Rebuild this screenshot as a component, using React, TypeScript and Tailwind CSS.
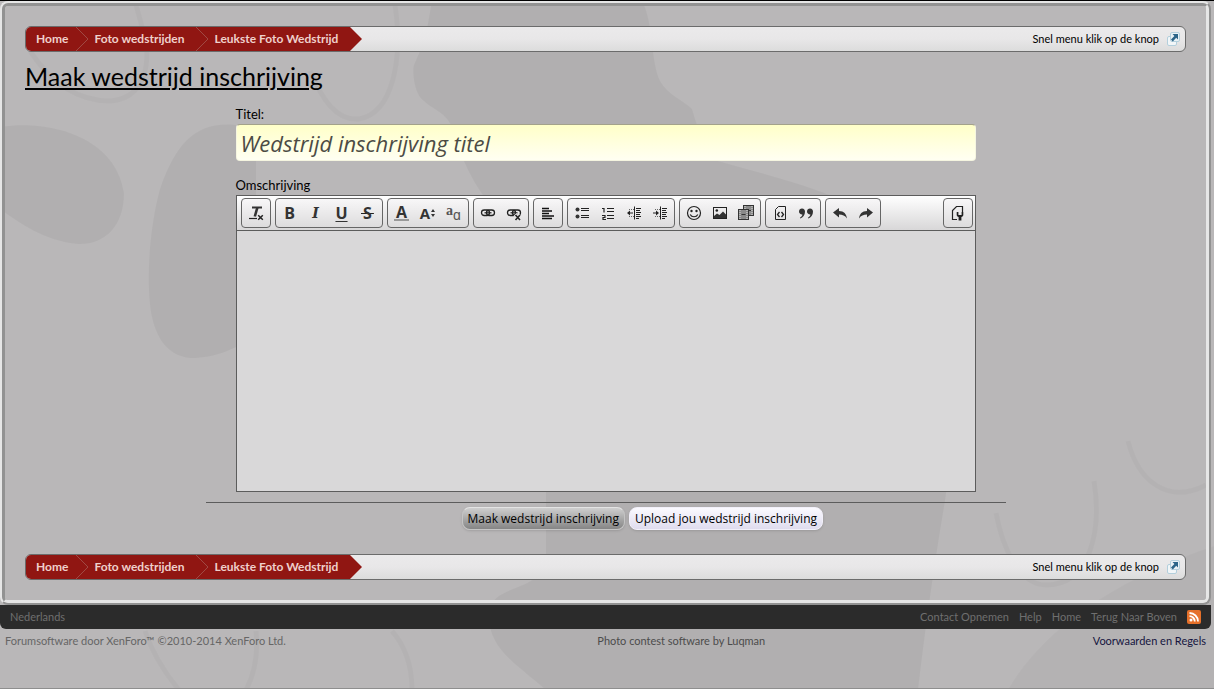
import type { ReactNode } from "react";

const crumbs = ["Home", "Foto wedstrijden", "Leukste Foto Wedstrijd"];

const footerLinks = ["Contact Opnemen", "Help", "Home", "Terug Naar Boven"];

type Tool = { label: string; icon: ReactNode };

function Icon({ children }: { children: ReactNode }) {
  return (
    <svg viewBox="0 0 16 16" className="w-4 h-4" fill="none" stroke="#222" aria-hidden="true">
      {children}
    </svg>
  );
}

const linkShape = (
  <>
    <rect x="1.5" y="5" width="8" height="5.5" rx="2.7" strokeWidth="1.3" />
    <rect x="6.5" y="5" width="8" height="5.5" rx="2.7" strokeWidth="1.3" />
    <path d="M4.5 7.8h7" strokeWidth="1.2" />
  </>
);

const indentLines = (
  <>
    <path d="M8.5 1.5v13" />
    <path d="M10 3.5h5M10 5.5h4M10 7.5h5M10 9.5h4M10 11.5h5M10 13.5h3" />
    <path d="M3 4.5h5M3 11.5h5" strokeDasharray="1 1" stroke="#666" />
  </>
);

const toolGroups: Tool[][] = [
  [
    {
      label: "Opmaak verwijderen",
      icon: (
        <Icon>
          <path d="M4 2.5h10" strokeWidth="2" stroke="#333" />
          <path d="M9.4 2.5 6.8 11.5" strokeWidth="2.6" stroke="#333" />
          <path d="M1 13.5h8" strokeWidth="1.2" />
          <path d="m10.2 10.2 4.6 4.6m0-4.6-4.6 4.6" strokeWidth="1.5" />
        </Icon>
      ),
    },
  ],
  [
    { label: "Vet", icon: <span className="font-bold">B</span> },
    { label: "Cursief", icon: <span className="font-bold italic font-['DejaVu_Serif',serif] text-sm">I</span> },
    { label: "Onderstrepen", icon: <span className="font-bold underline underline-offset-2">U</span> },
    {
      label: "Doorhalen",
      icon: <span className="font-bold px-[2px] bg-[linear-gradient(#222,#222)] bg-[length:100%_1px] bg-center bg-no-repeat">S</span>,
    },
  ],
  [
    { label: "Tekstkleur", icon: <span className="font-bold leading-[14px] border-b-2 border-[#999] px-[2px]">A</span> },
    {
      label: "Lettergrootte",
      icon: (
        <span className="flex items-center gap-px font-bold text-[15px]">
          A
          <svg viewBox="0 0 4 8" className="w-1 h-2" fill="#333" aria-hidden="true">
            <path d="M2 0l2 3H0zM2 8l2-3H0z" />
          </svg>
        </span>
      ),
    },
    {
      label: "Lettertype",
      icon: (
        <span className="flex text-[#555] text-sm leading-none">
          <span className="font-bold font-['Liberation_Serif',serif] pb-1">a</span>
          <span className="pt-1">ɑ</span>
        </span>
      ),
    },
  ],
  [
    { label: "Link invoegen", icon: <Icon>{linkShape}</Icon> },
    {
      label: "Link verwijderen",
      icon: (
        <Icon>
          {linkShape}
          <path d="m9 9.5 5 5.5m0-5.500-5 5.5" strokeWidth="3.5" stroke="#e6e5e6" />
          <path d="m9.5 10 4.500 5m0-5-4.500 5" strokeWidth="1.6" />
        </Icon>
      ),
    },
  ],
  [
    {
      label: "Uitlijnen",
      icon: (
        <Icon>
          <path d="M2 3.5h7M2 6h10M2 8.5h7M2 11h12M2 13.5h10" strokeWidth="1.6" stroke="#111" />
        </Icon>
      ),
    },
  ],
  [
    {
      label: "Opsomming",
      icon: (
        <Icon>
          <circle cx="3.5" cy="4.5" r="2" fill="#333" stroke="none" />
          <circle cx="3.5" cy="11.5" r="2" fill="#333" stroke="none" />
          <path d="M7 3.5h8M7 5.5h8M7 10.5h8M7 12.5h8" />
        </Icon>
      ),
    },
    {
      label: "Genummerde lijst",
      icon: (
        <Icon>
          <path d="M2 3.5h2v4M2 10.5h3v2H3v2h3" strokeWidth="1.2" />
          <path d="M7 3.5h7M7 6.5h7M7 10.5h7M7 13.5h7" />
        </Icon>
      ),
    },
    {
      label: "Inspringing verkleinen",
      icon: (
        <Icon>
          {indentLines}
          <path d="M2 8h5" />
          <path d="M1 8l3-2.5v5z" fill="#222" stroke="none" />
        </Icon>
      ),
    },
    {
      label: "Inspringing vergroten",
      icon: (
        <Icon>
          {indentLines}
          <path d="M1 8h5" />
          <path d="M7 8 4 5.5v5z" fill="#222" stroke="none" />
        </Icon>
      ),
    },
  ],
  [
    {
      label: "Smileys",
      icon: (
        <Icon>
          <circle cx="8" cy="8" r="6.5" strokeWidth="1.2" />
          <circle cx="5.5" cy="6" r="1.2" fill="#222" stroke="none" />
          <circle cx="10.5" cy="6" r="1.2" fill="#222" stroke="none" />
          <path d="M4.2 9.5c1.5 3 6.1 3 7.6 0" strokeWidth="1.2" />
        </Icon>
      ),
    },
    {
      label: "Afbeelding",
      icon: (
        <Icon>
          <rect x="1.5" y="2.5" width="13" height="11" />
          <circle cx="4.8" cy="5.5" r="1.3" fill="#222" stroke="none" />
          <path d="M2 13v-2l3-2.5L7.5 10 11 6.5l3 3V13z" fill="#333" stroke="none" />
        </Icon>
      ),
    },
    {
      label: "Media",
      icon: (
        <Icon>
          <rect x="5.5" y=".5" width="10" height="10" fill="#8a8a8a" stroke="#333" />
          <path d="M7 1v9M14 1v9" stroke="#ddd" strokeDasharray="1 1" />
          <path d="M8 5.5h5" stroke="#333" />
          <rect x=".5" y="4.5" width="10" height="10" fill="#8a8a8a" stroke="#333" />
          <path d="M2 5v9M9 5v9" stroke="#ddd" strokeDasharray="1 1" />
          <path d="M3.500 9.500h4" stroke="#333" />
        </Icon>
      ),
    },
  ],
  [
    {
      label: "Code",
      icon: (
        <Icon>
          <path d="M6.5 1.5h7v13h-10v-10z" />
          <path d="M7.5 7l-2 2.5 2 2.5M9.5 7l2 2.5-2 2.5" strokeWidth="1.3" />
        </Icon>
      ),
    },
    {
      label: "Citaat",
      icon: (
        <Icon>
          <g fill="#333" stroke="none">
            <path d="M4 3.5c2 0 3 1.3 3 3.2 0 3.3-2 6-4.700 6.800l-.4-.8c1.5-.9 2.400-2 2.500-3.300C2.400 9.500 1 8.300 1 6.500c0-1.700 1.300-3 3-3z" />
            <path d="M12 3.5c2 0 3 1.3 3 3.2 0 3.300-2 6-4.700 6.800l-.4-.8c1.500-.9 2.400-2 2.500-3.300-2 .1-3.400-1.100-3.400-2.900 0-1.700 1.300-3 3-3z" />
          </g>
        </Icon>
      ),
    },
  ],
  [
    {
      label: "Ongedaan maken",
      icon: (
        <Icon>
          <path d="M1 7.5 7 3v3c5 0 7.500 3 8 7.500-2-3-4.500-4-8-4v3z" fill="#333" stroke="none" />
        </Icon>
      ),
    },
    {
      label: "Opnieuw",
      icon: (
        <Icon>
          <path d="M15 7.5 9 3v3c-5 0-7.500 3-8 7.500 2-3 4.500-4 8-4v3z" fill="#333" stroke="none" />
        </Icon>
      ),
    },
  ],
];

const draftTool: Tool = {
  label: "Concept",
  icon: (
    <Icon>
      <path d="M7 14.5H2.5V5.500L6.500 1.500h6V7" strokeWidth="1.200" />
      <path d="M6.700 7v3c0 1 .9 1.700 1.900 2v3.500h2.800V12c1-.3 1.900-1 1.900-2V7h-1.700v3H8.400V7z" fill="#222" stroke="none" />
    </Icon>
  ),
};

function ToolGroup({ tools }: { tools: Tool[] }) {
  return (
    <div className="flex h-[30px] p-px border border-[#666] rounded bg-gradient-to-b from-[#f8f7f8] to-[#dddcdd]">
      {tools.map((tool) => (
        <button
          key={tool.label}
          type="button"
          aria-label={tool.label}
          className="w-[26px] flex items-center justify-center font-['Open_Sans',sans-serif] text-base leading-none text-[#333]"
        >
          {tool.icon}
        </button>
      ))}
    </div>
  );
}

function Breadcrumb() {
  return (
    <nav className="flex items-center justify-between h-[26px] border border-[#6b6b6b] rounded-md overflow-hidden bg-gradient-to-b from-[#ebeaeb] via-[#e8e7e8] to-[#dcdcdc]">
      <ol className="flex h-full">
        {crumbs.map((crumb, i) => {
          const last = i === crumbs.length - 1;
          return (
            <li key={crumb} className="flex">
              <a
                href="#"
                className={`flex items-center bg-[#901612] text-xs font-bold text-[#efd0cb] ${i === 0 ? "px-[10px] pr-2" : "pl-[6px] pr-3"}`}
              >
                {crumb}
              </a>
              <svg viewBox="0 0 12 24" className={`w-3 h-6 ${last ? "" : "bg-[#901612]"}`} aria-hidden="true">
                <path d="M0 0l12 12L0 24z" fill="#901612" />
                {!last && <path d="M0 0l12 12L0 24" fill="none" stroke="#a04a44" />}
              </svg>
            </li>
          );
        })}
      </ol>
      <a href="#" className="flex items-center gap-2 pr-1 text-[11px] text-black">
        Snel menu klik op de knop
        <svg viewBox="0 0 14 14" className="w-[14px] h-[14px]" fill="none" aria-hidden="true">
          <rect x=".5" y="4.5" width="9" height="9" rx="1.5" fill="#f2f6f8" stroke="#b3cfdc" />
          <rect x="3.5" y=".5" width="9" height="9" rx="1.5" fill="#e9f1f5" stroke="#b3cfdc" />
          <path d="M5.500 2H11v5.500L9.200 5.700 5.800 9.400 4 7.600 7.400 3.900z" fill="#2b6488" />
        </svg>
      </a>
    </nav>
  );
}

function PawBackground() {
  return (
    <svg
      viewBox="0 0 1214 689"
      preserveAspectRatio="xMidYMin slice"
      className="absolute inset-0 w-full h-full pointer-events-none"
      fill="none"
      aria-hidden="true"
    >
      <g fill="#000" fillOpacity=".04">
        <path d="M432 0h210c12 22 8 58 18 80 8 14 24 20 32 28 6 22 14 38 26 52 42 12 84 22 126 40 100 80 120 180 101 300-12 70-20 130-27 189H546c-30-26-58-42-57-75 0-34 57-20 57-60V300c0-60-70-80-92-170-8-20-20-20-30-30-10-6-12-30-10-36 14-30 14-44 18-64z" />
        <path d="M0 126c50-8 116 10 124 66 0 34-20 52-46 51C44 240 20 222 0 208z" />
        <path d="M236 124c-40-4-60 18-76 64-12 44-14 100-8 128 6 28 22 42 44 41 24-2 36-8 60-22V124z" />
        <path d="M1214 545c-90 30-170 80-206 144h206z" fillOpacity=".025" />
      </g>
      <g stroke="#000" strokeOpacity=".022" strokeWidth="5">
        <path d="M30 50c20 30 46 50 80 50 30-2 40-28 36-60L136 4" />
        <path d="M310 70c12 28 26 50 49 48 34-6 44-60 36-114" />
        <path d="M1094 480c8 50-4 104-48 104-28 0-44-40-50-72" />
        <path d="M1128 440c10 40 40 64 78 44" />
        <path d="M145 630c8 24 20 42 34 59M256 630c2 20 0 40-10 59" />
        <path d="M392 630c14 16 20 36 20 59" />
      </g>
    </svg>
  );
}

export default function App() {
  return (
    <div className="relative min-h-screen bg-[#b9b7b8] border-t border-t-black border-b border-b-[#8e8e8e] font-[Lato,'Trebuchet_MS',sans-serif] text-black">
      <PawBackground />

      <div className="relative mr-[3px]">
        <main className="border-[5px] border-[#e6e6e6] [border-style:ridge] rounded-lg p-5">
          <Breadcrumb />

          <h1 className="mt-2 text-[25px] leading-8 underline decoration-2 underline-offset-2">
            Maak wedstrijd inschrijving
          </h1>

          <form className="max-w-[800px] mx-auto mt-3" onSubmit={(e) => e.preventDefault()}>
            <div className="px-[30px]">
              <label htmlFor="title" className="block text-[13px] leading-5">
                Titel:
              </label>
              <input
                id="title"
                type="text"
                placeholder="Wedstrijd inschrijving titel"
                className="block w-full h-[37px] px-1 rounded border border-[#f5f5e0] border-t-[#a3a28a] bg-gradient-to-b from-[#ffffc8] to-[#fffff2] font-['Open_Sans',sans-serif] italic text-[22px] placeholder:text-[#4c4b45] outline-none"
              />

              <label htmlFor="description" className="block mt-[14px] text-[13px] leading-5">
                Omschrijving
              </label>
              <div className="border border-[#5c5c5c]">
                <div className="flex justify-between items-center h-[35px] pl-1 pr-[2px] border-b border-[#5c5c5c] bg-gradient-to-b from-white to-[#d8d7d8]">
                  <div className="flex gap-1">
                    {toolGroups.map((tools) => (
                      <ToolGroup key={tools[0].label} tools={tools} />
                    ))}
                  </div>
                  <ToolGroup tools={[draftTool]} />
                </div>
                <textarea id="description" className="block w-full h-[260px] p-2 bg-[#d9d8d9] resize-none outline-none text-[13px]" />
              </div>
            </div>

            <div className="flex gap-1 mt-[10px] pt-1 pl-64 border-t border-[#5c5c5c] font-['Open_Sans',sans-serif] text-xs">
              <button
                type="submit"
                className="h-[23px] px-[5px] rounded-lg border border-[#c4c4c4] border-t-[#e4e4e4] bg-gradient-to-b from-[#cfcfcf] to-[#858585] leading-none shadow-sm"
              >
                Maak wedstrijd inschrijving
              </button>
              <button
                type="button"
                className="h-[23px] px-[5px] rounded-lg border border-[#f2f0fa] bg-gradient-to-b from-[#fbfaff] to-[#dfdcee] leading-none shadow-sm"
              >
                Upload jou wedstrijd inschrijving
              </button>
            </div>
          </form>

          <div className="mt-6">
            <Breadcrumb />
          </div>
        </main>

        <footer className="text-[11px]">
          <div className="flex items-center justify-between h-6 px-[10px] rounded-b-md bg-[#2b2b2b] text-[#6f6f6f]">
            <a href="#">Nederlands</a>
            <div className="flex items-center gap-[10px]">
              {footerLinks.map((link) => (
                <a key={link} href="#">
                  {link}
                </a>
              ))}
              <a href="#" aria-label="RSS">
                <svg viewBox="0 0 14 14" className="w-[14px] h-[14px]" fill="none" aria-hidden="true">
                  <rect width="14" height="14" rx="2" fill="#e5702a" />
                  <circle cx="4" cy="10" r="1.5" fill="#fff" />
                  <path d="M2.5 6.2a5.3 5.3 0 0 1 5.3 5.3M2.5 3a8.500 8.500 0 0 1 8.500 8.500" stroke="#fff" strokeWidth="1.8" />
                </svg>
              </a>
            </div>
          </div>
          <div className="grid grid-cols-3 px-[5px] leading-6 text-[#666]">
            <a href="#">Forumsoftware door XenForo™ ©2010-2014 XenForo Ltd.</a>
            <span className="pl-48 whitespace-nowrap text-[#4c4c4c]">Photo contest software by Luqman</span>
            <a href="#" className="text-right text-[#151540]">
              Voorwaarden en Regels
            </a>
          </div>
        </footer>
      </div>
    </div>
  );
}
